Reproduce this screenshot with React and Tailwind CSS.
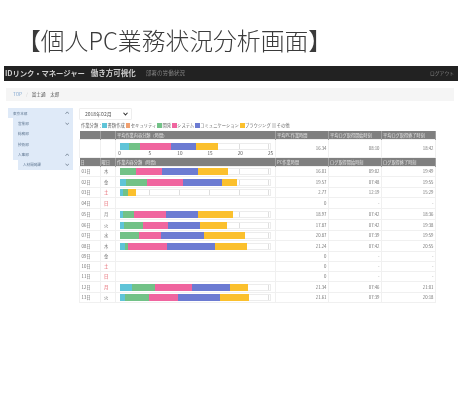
const FONT = '"Noto Sans CJK JP","Liberation Sans",sans-serif';
const C = { t: '#5fc4d8', o: '#f0a070', g: '#72c287', p: '#f0659f', b: '#6c7bd2', y: '#fbc02d' };
const rows = [
  ['01日', '木', '', [['g', 358, 408], ['p', 408, 487], ['b', 487, 593], ['y', 593, 683]], '16.01', '09:02', '19:49', 10],
  ['02日', '金', '', [['t', 358, 376], ['g', 376, 441], ['p', 441, 548], ['b', 548, 665], ['y', 665, 711]], '19.57', '07:48', '19:55', 11],
  ['03日', '土', 'r', [['t', 358, 367], ['g', 367, 384], ['y', 384, 408]], '2.77', '12:19', '15:29', 10],
  ['04日', '日', 'r', null, '0', '-', '-', 11],
  ['05日', '月', '', [['t', 358, 368], ['g', 368, 402], ['p', 402, 497], ['b', 497, 595], ['y', 595, 700]], '18.97', '07:42', '18:36', 11],
  ['06日', '火', '', [['t', 358, 370], ['g', 370, 428], ['p', 428, 504], ['b', 504, 599], ['y', 599, 680]], '17.87', '07:42', '19:38', 11],
  ['07日', '水', '', [['g', 358, 415], ['p', 415, 481], ['b', 481, 610], ['y', 610, 734]], '20.87', '07:39', '19:59', 10],
  ['08日', '木', '', [['t', 358, 375], ['g', 375, 383], ['p', 383, 501], ['b', 501, 645], ['y', 645, 741]], '21.24', '07:42', '20:55', 11],
  ['09日', '金', '', null, '0', '-', '-', 10],
  ['10日', '土', 'r', null, '0', '-', '-', 10],
  ['11日', '日', 'r', null, '0', '-', '-', 10],
  ['12日', '月', 'r', [['t', 358, 396], ['g', 396, 464], ['p', 464, 576], ['b', 576, 691], ['y', 691, 743]], '21.34', '07:46', '21:01', 11],
  ['13日', '火', '', [['t', 358, 375], ['g', 375, 446], ['p', 446, 535], ['b', 535, 660], ['y', 660, 748]], '21.61', '07:39', '20:18', 10],
];
const avg = [['t', 358, 386], ['g', 386, 421], ['p', 421, 514], ['b', 514, 587], ['y', 590, 656]];
const legend = [['t', '書類作成'], ['o', 'セキュリティ'], ['g', '開発'], ['p', 'システム'], ['b', 'コミュニケーション'], ['y', 'ブラウジング'], ['n', 'その他']];
const side = [
  ['東京本部', 0, 'u'], ['営業部', 1, 'd'], ['総務部', 1, ''], ['技術部', 1, ''], ['人事部', 1, 'u'], ['人材開発課', 2, 'd'],
];

function Chev({ up }) {
  return (
    <svg width="4.5" height="3.5" viewBox="0 0 10 8" className="shrink-0">
      <path d={up ? 'M1 6.5 L5 2 L9 6.5' : 'M1 1.5 L5 6 L9 1.5'} fill="none" stroke="#5b6b7d" strokeWidth="1.6" />
    </svg>
  );
}

function Bar({ segs }) {
  return (
    <div className="relative w-[151px] h-[7px] border border-[#ececec] bg-white">
      <div className="absolute inset-0 flex">
        {[0, 1, 2, 3, 4].map((i) => (
          <div key={i} className="w-[30px] border-r border-[#dedede]" />
        ))}
      </div>
      <div className="absolute -inset-px flex">
        {segs.map(([c, a, b], i) => (
          <div key={i} style={{ width: (b - a) / 3, background: C[c] }} />
        ))}
      </div>
    </div>
  );
}

const th = 'bg-[#7f7f7f] text-[#e4e4e4] font-normal text-[4.2px] leading-none text-left pl-px border-r border-[#a0a0a0]';
const td = 'border border-[#f0f0f0] text-[#707070] text-[4.3px] leading-none p-0';
const num = `${td} text-right pr-[1.5px]`;

export default function App() {
  return (
    <div className="w-[470px] h-[417px] bg-white overflow-hidden blur-[0.45px]" style={{ fontFamily: FONT }}>
      <h1 className="h-[66px] pl-[17px] pt-[26px] text-[23.8px] leading-[28px] font-light text-[#3a3a3a] whitespace-nowrap">
        【個人PC業務状況分析画面】
      </h1>
      <div className="ml-[4px] w-[454px] h-[15px] bg-[#222] flex items-center pl-[1px] pr-[4px] pb-[1.5px] text-[#cfcfcf]">
        <span className="text-[7.4px] font-bold tracking-[-0.1px]">IDリンク・マネージャー</span>
        <span className="text-[7.5px] font-bold ml-[6px]">働き方可視化</span>
        <span className="text-[5.6px] text-[#858585] ml-[10px]">部署の労働状況</span>
        <span className="text-[4.8px] text-[#858585] ml-auto">ログアウト</span>
      </div>
      <div className="ml-[6px] mt-[7px] w-[448px] h-[13px] bg-[#f5f5f5] flex items-center pl-[7px] text-[4.6px] text-[#555]">
        <span className="text-[#7fa6d0]">TOP</span>
        <span className="text-[#ccc] mx-[4px]">/</span>
        <span>富士通　太郎</span>
      </div>
      <div className="flex mt-[7px] pl-[8px]">
        <div className="w-[65px] h-[62px] flex flex-col text-[3.6px] text-[#5f7690]">
          {side.map(([n, lvl, ch], i) => (
            <div key={i} className={`h-[10.4px] shrink-0 flex ${lvl === 1 ? 'pl-[5px]' : lvl === 2 ? 'pl-[10px]' : ''}`}>
              <div className="flex-1 bg-[#dfeaf8] flex items-center justify-between pr-[4px] pl-[5px]">
                <span>{n}</span>
                {ch && <Chev up={ch === 'u'} />}
              </div>
            </div>
          ))}
        </div>
        <div className="ml-[6px] w-[356px]">
          <div className="w-[53px] h-[12px] border border-[#eeeeee] rounded-[1px] flex items-center justify-between pl-[5px] pr-[3px] text-[5px] text-[#555]">
            <span>2018年02月</span>
            <svg width="5" height="4" viewBox="0 0 10 8"><path d="M1 1.5 L5 6 L9 1.5" fill="none" stroke="#333" strokeWidth="2.2" /></svg>
          </div>
          <div className="h-[10.5px] flex items-center text-[4.3px] text-[#666] pl-[2px] whitespace-nowrap">
            <span>作業分類：</span>
            {legend.map(([c, l]) => (
              <span key={l} className="flex items-center mr-[1px]">
                <span className="w-[4.7px] h-[4.7px] mr-[0.4px]" style={{ background: C[c] || '#dcdcdc' }} />
                {l}
              </span>
            ))}
          </div>
          <table className="border-collapse table-fixed w-[356px]">
            <colgroup>
              <col className="w-[20.5px]" />
              <col className="w-[15.5px]" />
              <col className="w-[160px]" />
              <col className="w-[53px]" />
              <col className="w-[53px]" />
              <col className="w-[54px]" />
            </colgroup>
            <tbody>
              <tr className="h-[9px]">
                <th className={th}></th>
                <th className={th}></th>
                <th className={th}>平均作業内容分類（時間）</th>
                <th className={th}>平均PC作業時間</th>
                <th className={th}>平均ログ取得開始時刻</th>
                <th className={th}>平均ログ取得終了時刻</th>
              </tr>
              <tr className="h-[18px]">
                <td className={td}></td>
                <td className={td}></td>
                <td className={td}>
                  <div className="pl-[3.5px] pt-[2.5px]">
                    <Bar segs={avg} />
                    <div className="relative h-[7px] text-[4.6px] text-[#555]">
                      {[0, 5, 10, 15, 20, 25].map((v, i) => (
                        <span key={v} className="absolute top-[1px] -translate-x-1/2" style={{ left: i * 30.2 }}>{v}</span>
                      ))}
                    </div>
                  </div>
                </td>
                <td className={num}>16.34</td>
                <td className={num}>08:10</td>
                <td className={num}>18:42</td>
              </tr>
              <tr className="h-[9px]">
                <th className={th}>日</th>
                <th className={th}>曜日</th>
                <th className={th}>作業内容分類（時間）</th>
                <th className={th}>PC作業時間</th>
                <th className={th}>ログ取得開始時刻</th>
                <th className={th}>ログ取得終了時刻</th>
              </tr>
              {rows.map(([d, w, r, segs, pc, s, e, h]) => (
                <tr key={d} style={{ height: h }}>
                  <td className={`${td} pl-[1.5px]`}>{d}</td>
                  <td className={`${td} text-center pr-[3px] ${r ? 'text-[#e0444f]' : 'text-[#333]'}`}>{w}</td>
                  <td className={td}>
                    {segs && (
                      <div className="pl-[3.5px]">
                        <Bar segs={segs} />
                      </div>
                    )}
                  </td>
                  <td className={num}>{pc}</td>
                  <td className={num}>{s}</td>
                  <td className={num}>{e}</td>
                </tr>
              ))}
            </tbody>
          </table>
        </div>
      </div>
    </div>
  );
}
